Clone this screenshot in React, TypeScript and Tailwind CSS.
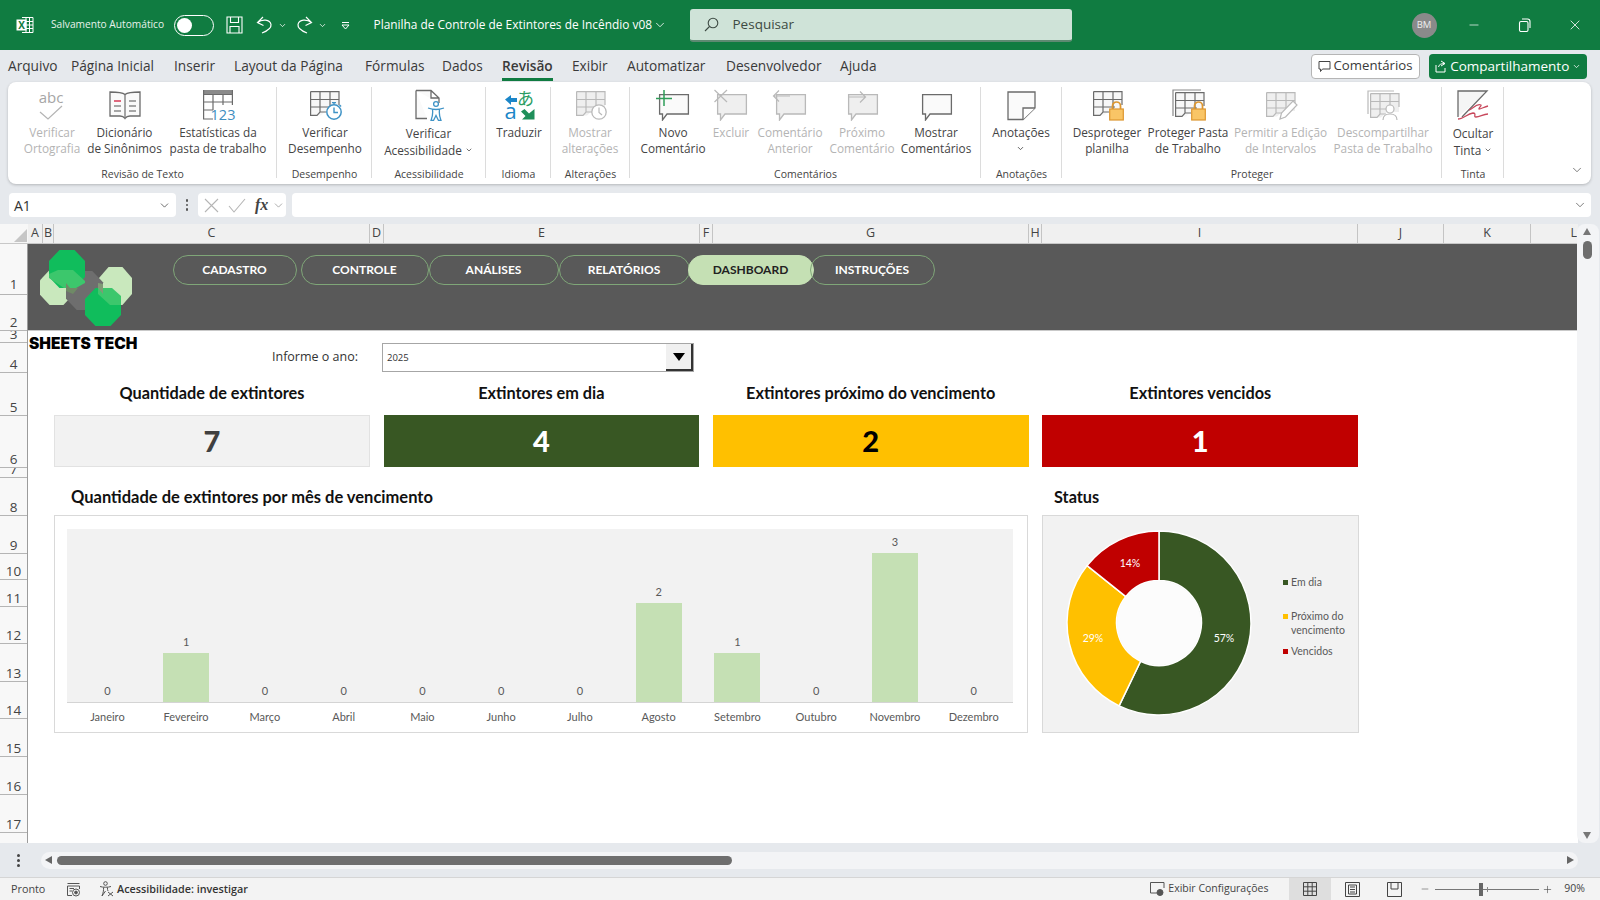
import React from "react";
import { ChevronDown, Minus, X, Plus } from "lucide-react";

const G = "#6b6b6b";
const D = "#b9b9b9";

function SheetGrid({ c, fill, x = 0, y = 0 }: { c: string; fill?: string; x?: number; y?: number }) {
  return (
    <g transform={`translate(${x} ${y})`} fill="none" stroke={c} strokeWidth="1.2">
      <path d="M.6.6H29V19H17L11 24.4H.6Z" fill={fill || "#f7f7f7"} stroke="none" />
      <path d="M.6.6H29V14M.6.6V24.4H7L10 21H16M.6 8.5H29M.6 16H22M10 .6V21M20 .6V18" />
    </g>
  );
}
function Lock({ x, y }: { x: number; y: number }) {
  return (
    <g transform={`translate(${x} ${y})`}>
      <path d="M3.5 8V5a4 4 0 0 1 8 0v3" fill="none" stroke="#dd962f" strokeWidth="1.7" />
      <rect x=".7" y="8" width="13.6" height="11" fill="#f9c566" stroke="#dd962f" strokeWidth="1.2" />
    </g>
  );
}
function Bubble({ c, fill }: { c: string; fill: string }) {
  return <path d="M4.6 5.6H33.4V25H12L7.5 31V25H4.6Z" fill={fill} stroke={c} strokeWidth="1.3" />;
}
function Ico({ children }: { children: React.ReactNode }) {
  return (
    <svg width="36" height="32" viewBox="0 0 36 32" className="shrink-0">
      {children}
    </svg>
  );
}

const Spell = () => (
  <Ico>
    <text x="17" y="13.5" textAnchor="middle" fontSize="15" fill="#a6a6a6" fontFamily="Open Sans, sans-serif">abc</text>
    <path d="M6 23l8 7L28 17" fill="none" stroke="#b4b4b4" strokeWidth="1.2" />
  </Ico>
);
const Book = () => (
  <Ico>
    <path d="M18 5.5C15 3 8 3 3 3V27H13C15 27 17 28 18 29.5C19 28 21 27 23 27H33V3C28 3 21 3 18 5.5Z" fill="#fafafa" stroke={G} strokeWidth="1.3" />
    <path d="M18 5.5V29" stroke={G} strokeWidth="1.2" />
    <path d="M7 12h7" stroke="#d9455f" strokeWidth="1.6" />
    <path d="M7 17h7M7 22h7M22 12h7M22 17h7M22 22h7" stroke="#8a8a8a" strokeWidth="1.3" />
  </Ico>
);
const Stats = () => (
  <Ico>
    <rect x="3.5" y="1" width="29" height="4.5" fill="#8a8a8a" />
    <path d="M3.6 1V30H13M32.4 1V16M3.6 5.5H32.4M3.6 13H32.4M3.6 21H13M13 5.5V21M23 5.5V16" fill="none" stroke={G} strokeWidth="1.2" />
    <text x="23" y="31" textAnchor="middle" fontSize="14.5" fill="#3f8ec0" fontFamily="Open Sans, sans-serif">123</text>
  </Ico>
);
const Perf = () => (
  <Ico>
    <SheetGrid c={G} x={3} y={2} />
    <circle cx="27" cy="23" r="7.2" fill="#fff" stroke="#3f93c6" strokeWidth="1.5" />
    <path d="M27 18.5V23.5H31M25 13.6h4M27 13.6v2M32.5 16l1.6 1.5" fill="none" stroke="#3f93c6" strokeWidth="1.4" />
  </Ico>
);
const Access = () => (
  <Ico>
    <path d="M5 1.5H20L28 9V14M5 1.5V29.5H16M20 1.5V9H28" fill="#fafafa" stroke={G} strokeWidth="1.3" />
    <g fill="none" stroke="#3f93c6" strokeWidth="1.3">
      <circle cx="25" cy="15" r="2.4" />
      <path d="M17 19C20 20 22 20.5 25 20.5S30 20 33 19M21.5 20.5C22 24 21.8 27 20 31.5H22.5L25 26.5L27.5 31.5H30C28.2 27 28 24 28.5 20.5" />
    </g>
  </Ico>
);
const Translate = () => (
  <Ico>
    <path d="M4 10.5L10 6V9H16V13H10V16Z" fill="#1b86c8" />
    <text x="24.5" y="15.5" textAnchor="middle" fontSize="17" fill="#2c9d63" fontFamily="Noto Sans CJK JP, sans-serif">あ</text>
    <text x="9.5" y="30" textAnchor="middle" fontSize="22" fill="#1b86c8" fontFamily="Open Sans, sans-serif">a</text>
    <path d="M33.5 30.5H21L24.5 27L20 22.5L23.5 20L28 24.5L33.5 20Z" fill="#1f8f5a" />
  </Ico>
);
const Changes = () => (
  <Ico>
    <SheetGrid c={D} fill="#efefef" x={4} y={2} />
    <circle cx="27" cy="23" r="7.2" fill="#fff" stroke={D} strokeWidth="1.3" />
    <path d="M27 18.5V23.5L30 26" fill="none" stroke={D} strokeWidth="1.2" />
  </Ico>
);
const NewC = () => (
  <Ico>
    <Bubble c={G} fill="#fafafa" />
    <path d="M1 9.5H17M9 1V17" stroke="#2f9e5a" strokeWidth="1.5" />
  </Ico>
);
const DelC = () => (
  <Ico>
    <Bubble c={D} fill="#efefef" />
    <path d="M1.5 1L14 13M14 1L1.5 13" stroke={D} strokeWidth="1.2" />
  </Ico>
);
const PrevC = () => (
  <Ico>
    <Bubble c={D} fill="#efefef" />
    <path d="M18 7H2M7 1.5L1.5 7L7 12.5" fill="none" stroke={D} strokeWidth="1.2" />
  </Ico>
);
const NextC = () => (
  <Ico>
    <Bubble c={D} fill="#efefef" />
    <path d="M4 8H21M16 2.5L21.5 8L16 13.5" fill="none" stroke={D} strokeWidth="1.2" />
  </Ico>
);
const ShowC = () => (
  <Ico>
    <Bubble c={G} fill="#fafafa" />
  </Ico>
);
const Note = () => (
  <Ico>
    <path d="M5 3H32V19L20 30.5H5Z" fill="#fafafa" stroke={G} strokeWidth="1.3" />
    <path d="M32 19H20V30.5" fill="#fff" stroke={G} strokeWidth="1.3" />
  </Ico>
);
const Unprot = () => (
  <Ico>
    <SheetGrid c={G} x={4} y={2} />
    <Lock x={20} y={12} />
  </Ico>
);
const ProtW = () => (
  <Ico>
    <path d="M3 27V1H31" fill="none" stroke="#8a8a8a" strokeWidth="1.2" />
    <SheetGrid c={G} x={5} y={3} />
    <Lock x={21} y={12} />
  </Ico>
);
const AllowE = () => (
  <Ico>
    <SheetGrid c={D} fill="#efefef" x={3} y={3} />
    <path d="M17 30l1.5-6L30 12l4 4L22.5 28Z" fill="#fff" stroke={D} strokeWidth="1.2" />
  </Ico>
);
const Unshare = () => (
  <Ico>
    <path d="M3 25V2H29" fill="none" stroke={D} strokeWidth="1.2" />
    <SheetGrid c={D} fill="#efefef" x={5} y={4} />
    <circle cx="25" cy="20" r="4" fill="#fff" stroke={D} strokeWidth="1.2" />
    <path d="M18 31C18 27 21 25 25 25S32 27 32 31" fill="#fff" stroke={D} strokeWidth="1.2" />
  </Ico>
);
const Ink = () => (
  <Ico>
    <path d="M33 2H3V28L33 2Z" fill="#f5f5f5" />
    <path d="M3 28V2H32L7 28" fill="none" stroke={G} strokeWidth="1.3" />
    <path d="M14 21C18 20 21 14 26 16C27 17 23 19 24 20C26 20 29 18 33 17M3 30C8 30 12 25 18 24C22 24 18 28 21 28C25 28 28 25 33 25" fill="none" stroke="#c8485c" strokeWidth="1.3" />
  </Ico>
);

type Btn = { l: string[]; icon: React.ReactNode; cls: string; off?: boolean; low?: boolean; caret?: boolean; caretBelow?: boolean };
type Grp = { label: string; w: string; btns: Btn[] };

const groups: Grp[] = [
  {
    label: "Revisão de Texto",
    w: "w-[269px]",
    btns: [
      { l: ["Verificar", "Ortografia"], icon: <Spell />, cls: "w-[57px] ml-[15.5px]", off: true },
      { l: ["Dicionário", "de Sinônimos"], icon: <Book />, cls: "w-[75px] ml-[6.5px]" },
      { l: ["Estatísticas da", "pasta de trabalho"], icon: <Stats />, cls: "w-[98px] ml-[7px]" },
    ],
  },
  { label: "Desempenho", w: "w-[95px]", btns: [{ l: ["Verificar", "Desempenho"], icon: <Perf />, cls: "w-[74px] ml-[11px]" }] },
  { label: "Acessibilidade", w: "w-[114px]", btns: [{ l: ["Verificar", "Acessibilidade"], icon: <Access />, cls: "w-[91px] ml-[11px]", low: true, caret: true }] },
  { label: "Idioma", w: "w-[65px]", btns: [{ l: ["Traduzir"], icon: <Translate />, cls: "w-[46px] ml-[10px]" }] },
  { label: "Alterações", w: "w-[79px]", btns: [{ l: ["Mostrar", "alterações"], icon: <Changes />, cls: "w-[58px] ml-[10px]", off: true }] },
  {
    label: "Comentários",
    w: "w-[351px]",
    btns: [
      { l: ["Novo", "Comentário"], icon: <NewC />, cls: "w-[66px] ml-[10px]" },
      { l: ["Excluir"], icon: <DelC />, cls: "w-[36px] ml-[7px]", off: true },
      { l: ["Comentário", "Anterior"], icon: <PrevC />, cls: "w-[66px] ml-[8px]", off: true },
      { l: ["Próximo", "Comentário"], icon: <NextC />, cls: "w-[66px] ml-[6px]", off: true },
      { l: ["Mostrar", "Comentários"], icon: <ShowC />, cls: "w-[70px] ml-[6px]" },
    ],
  },
  { label: "Anotações", w: "w-[81px]", btns: [{ l: ["Anotações"], icon: <Note />, cls: "w-[60px] ml-[10px]", caretBelow: true }] },
  {
    label: "Proteger",
    w: "w-[380px]",
    btns: [
      { l: ["Desproteger", "planilha"], icon: <Unprot />, cls: "w-[70px] ml-[10px]" },
      { l: ["Proteger Pasta", "de Trabalho"], icon: <ProtW />, cls: "w-[80px] ml-[6px]" },
      { l: ["Permitir a Edição", "de Intervalos"], icon: <AllowE />, cls: "w-[94px] ml-[5.5px]", off: true },
      { l: ["Descompartilhar", "Pasta de Trabalho"], icon: <Unshare />, cls: "w-[98px] ml-[6.5px]", off: true },
    ],
  },
  { label: "Tinta", w: "w-[62px]", btns: [{ l: ["Ocultar", "Tinta"], icon: <Ink />, cls: "w-[42px] ml-[10px]", low: true, caret: true }] },
];

const menu = [
  ["Arquivo", "w-[63px]"],
  ["Página Inicial", "w-[103px]"],
  ["Inserir", "w-[60px]"],
  ["Layout da Página", "w-[131px]"],
  ["Fórmulas", "w-[77px]"],
  ["Dados", "w-[60px]"],
  ["Revisão", "w-[70px]"],
  ["Exibir", "w-[55px]"],
  ["Automatizar", "w-[99px]"],
  ["Desenvolvedor", "w-[114px]"],
  ["Ajuda", "w-[40px]"],
];

const cols = [
  ["A", "w-[15px] justify-center border-r"],
  ["B", "w-[11px] justify-center border-r"],
  ["C", "w-[316px] justify-center border-r"],
  ["D", "w-[14px] justify-center border-r"],
  ["E", "w-[316px] justify-center border-r"],
  ["F", "w-[13px] justify-center border-r"],
  ["G", "w-[316px] justify-center border-r"],
  ["H", "w-[13px] justify-center border-r"],
  ["I", "w-[316px] justify-center border-r"],
  ["J", "w-[86px] justify-center border-r"],
  ["K", "w-[87px] justify-center border-r"],
  ["L", "w-[47px] justify-end pr-[1px]"],
];

const rows = [
  ["1", "h-[51px] pb-[2px]"],
  ["2", "h-[36px]"],
  ["3", "h-[12px]"],
  ["4", "h-[30px]"],
  ["5", "h-[43px]"],
  ["6", "h-[52px]"],
  ["7", "h-[10px]"],
  ["8", "h-[38px]"],
  ["9", "h-[38px]"],
  ["10", "h-[26px]"],
  ["11", "h-[27px]"],
  ["12", "h-[37px]"],
  ["13", "h-[38px]"],
  ["14", "h-[37px]"],
  ["15", "h-[38px]"],
  ["16", "h-[38px]"],
  ["17", "h-[38px]"],
];

const pills = [
  ["CADASTRO", "w-[124px]", false],
  ["CONTROLE", "w-[128px] ml-[4px]", false],
  ["ANÁLISES", "w-[130px]", false],
  ["RELATÓRIOS", "w-[131px]", false],
  ["DASHBOARD", "w-[126px] -ml-[2px]", true],
  ["INSTRUÇÕES", "w-[125px] -ml-[4px]", false],
] as const;

const cards = [
  ["Quantidade de extintores", "7", "bg-[#f2f2f2] border border-[#e2e2e2] text-[#404040]"],
  ["Extintores em dia", "4", "bg-[#385723] text-white"],
  ["Extintores próximo do vencimento", "2", "bg-[#ffc000] text-black"],
  ["Extintores vencidos", "1", "bg-[#c00000] text-white"],
];

const months: [string, number][] = [
  ["Janeiro", 0],
  ["Fevereiro", 1],
  ["Março", 0],
  ["Abril", 0],
  ["Maio", 0],
  ["Junho", 0],
  ["Julho", 0],
  ["Agosto", 2],
  ["Setembro", 1],
  ["Outubro", 0],
  ["Novembro", 3],
  ["Dezembro", 0],
];
const barH = [0, 49, 99, 149];

function Logo() {
  const oct = (x: number, y: number, w: number, h: number) => {
    const a = w * 0.29;
    const b = h * 0.29;
    return `${x + a},${y} ${x + w - a},${y} ${x + w},${y + b} ${x + w},${y + h - b} ${x + w - a},${y + h} ${x + a},${y + h} ${x},${y + h - b} ${x},${y + b}`;
  };
  return (
    <svg width="93" height="76" viewBox="0 0 93 76" className="shrink-0">
      <polygon points={oct(0, 20, 33, 35)} fill="#c9e8bd" />
      <polygon points={oct(59, 17, 33, 38)} fill="#c9e8bd" />
      <polygon points={oct(26, 21, 37, 39)} fill="#6e6e6e" />
      <polygon points={oct(9, 0, 36, 38)} fill="#10bd5c" />
      <polygon points={oct(45, 38, 36, 38)} fill="#10bd5c" />
      <polygon points="9,24 18,20 33,20 45,31 45,33 36,38 24,38 9,28" fill="#3cc76c" />
      <polygon points="58,38 72,38 81,46 81,55 70,55 58,44" fill="#3cc76c" />
      <polygon points="26,33 30,38 38,38 33,44 26,41" fill="#6f8a66" />
      <polygon points="58,33 63,34 63,44 58,38" fill="#7f9a76" />
    </svg>
  );
}

function Donut() {
  const cx = 100;
  const cy = 100;
  const R = 92;
  const r = 42.4;
  const data: [number, string][] = [
    [4 / 7, "#385723"],
    [2 / 7, "#ffc000"],
    [1 / 7, "#c00000"],
  ];
  let a = -Math.PI / 2;
  return (
    <svg width="200" height="200" viewBox="0 0 200 200" className="shrink-0 mt-[7px] ml-[16px]">
      {data.map(([f, c]) => {
        const b = a + f * Math.PI * 2;
        const large = f > 0.5 ? 1 : 0;
        const p = (rad: number, t: number) => `${cx + rad * Math.cos(t)} ${cy + rad * Math.sin(t)}`;
        const d = `M${p(r, a)}L${p(R, a)}A${R} ${R} 0 ${large} 1 ${p(R, b)}L${p(r, b)}A${r} ${r} 0 ${large} 0 ${p(r, a)}Z`;
        a = b;
        return <path key={c} d={d} fill={c} stroke="#fff" strokeWidth="1.5" />;
      })}
      <circle cx={cx} cy={cy} r={r - 0.5} fill="#fcfcfc" />
      <g fontSize="10.5" fill="#fff" textAnchor="middle" fontFamily="Lato, sans-serif">
        <text x="165" y="119">57%</text>
        <text x="34" y="119">29%</text>
        <text x="71" y="44">14%</text>
      </g>
    </svg>
  );
}

export default function App() {
  return (
    <div className="w-[1600px] h-[900px] overflow-hidden flex flex-col bg-[#e6e9ed] font-['Open_Sans',sans-serif] text-[#333]">
      {/* Title bar */}
      <div className="h-[50px] shrink-0 flex items-center bg-[#107c41] text-white">
        <svg width="18" height="18" viewBox="0 0 18 18" className="ml-[16px] shrink-0">
          <path d="M6 1.5H17V16.5H6M10 1.5V16.5M13.5 1.5V16.5M10 5.5H17M10 9H17M10 12.5H17" fill="none" stroke="#fff" strokeWidth="1" />
          <rect x="0.5" y="3.5" width="10" height="11" fill="#fff" />
          <text x="5.5" y="12.5" textAnchor="middle" fontSize="10" fontWeight="700" fill="#107c41" fontFamily="Open Sans, sans-serif">X</text>
        </svg>
        <span className="ml-[17px] w-[114.5px] text-[10.2px] whitespace-nowrap text-[#e8f2ec]">Salvamento Automático</span>
        <span className="ml-[8px] w-[40px] h-[21px] shrink-0 rounded-full border border-white flex items-center pl-[2px]">
          <span className="w-[15px] h-[15px] rounded-full bg-white" />
        </span>
        <svg width="17" height="18" viewBox="0 0 17 18" className="ml-[12.5px] shrink-0" fill="none" stroke="#fff" strokeWidth="1.1">
          <path d="M1 1H16V17H1ZM4.5 1V6.5H12.5V1M4 17V10.5H13V17" />
        </svg>
        <svg width="17" height="18" viewBox="0 0 17 18" className="ml-[13px] shrink-0" fill="none" stroke="#fff" strokeWidth="1.2">
          <path d="M7 1L1.5 6.5L7.5 9.5M1.5 6.5C6 3 14 3 15 8.5C15.5 12 11 15 6 17" />
        </svg>
        <ChevronDown size={9} strokeWidth={2} className="ml-[5px] shrink-0" />
        <svg width="17" height="18" viewBox="0 0 17 18" className="ml-[9px] shrink-0" fill="none" stroke="#fff" strokeWidth="1.2">
          <path d="M10 1L15.5 6.5L9.5 9.5M15.5 6.5C11 3 3 3 2 8.5C1.5 12 6 15 11 17" />
        </svg>
        <ChevronDown size={9} strokeWidth={2} className="ml-[5px] shrink-0" />
        <svg width="9" height="9" viewBox="0 0 9 9" className="ml-[14px] shrink-0" fill="none" stroke="#fff" strokeWidth="1">
          <path d="M1 1.5H8M1 4L4.5 8L8 4Z" />
        </svg>
        <span className="ml-[23.5px] w-[278px] text-[11.9px] whitespace-nowrap">Planilha de Controle de Extintores de Incêndio v08</span>
        <ChevronDown size={14} strokeWidth={1.4} className="ml-[1px] shrink-0" />
        <div className="ml-[23px] w-[382px] h-[33px] shrink-0 rounded-[3px] bg-[#cfe3d8] border-b-2 border-[#5e8a72] flex items-center pl-[14px] text-[#3d4a43]">
          <svg width="15" height="15" viewBox="0 0 15 15" fill="none" stroke="#3d4a43" strokeWidth="1.1">
            <circle cx="9" cy="6" r="4.8" />
            <path d="M5.5 9.5L1 14" />
          </svg>
          <span className="ml-[14px] text-[13.5px]">Pesquisar</span>
        </div>
        <span className="ml-[340px] w-[25px] h-[25px] shrink-0 rounded-full bg-[#8a8a8a] text-[9.5px] flex items-center justify-center text-[#eee]">BM</span>
        <Minus size={14} strokeWidth={1.2} className="ml-[30px] shrink-0" />
        <svg width="14" height="14" viewBox="0 0 14 14" className="ml-[36px] shrink-0" fill="none" stroke="#fff" strokeWidth="1.1">
          <rect x="2.5" y="3.5" width="8.5" height="10" rx="1.5" />
          <path d="M5 1H10.5C12 1 13 2 13 3.5V10" />
        </svg>
        <X size={16} strokeWidth={1.2} className="ml-[36px] shrink-0" />
      </div>

      {/* Menu */}
      <div className="h-[32px] shrink-0 flex items-center pl-[8px] text-[13.7px] text-[#3a3a3a]">
        {menu.map(([m, w]) => (
          <span key={m} className={`${w} shrink-0 whitespace-nowrap pt-[1px]`}>
            {m === "Revisão" ? (
              <span className="relative font-semibold inline-block">
                {m}
                <span className="absolute left-0 right-0 -bottom-[4px] h-[2.5px] bg-[#107c41]" />
              </span>
            ) : (
              m
            )}
          </span>
        ))}
        <div className="ml-auto mr-[13px] flex items-center">
          <div className="w-[109px] h-[25px] bg-white border border-[#b5b5b5] rounded-[4px] flex items-center justify-center gap-[3px] text-[13.2px]">
            <svg width="13" height="13" viewBox="0 0 13 13" fill="none" stroke="#444" strokeWidth="1">
              <path d="M1 1.5H12V9H4.5L2.5 11.5V9H1Z" />
            </svg>
            Comentários
          </div>
          <div className="ml-[9px] w-[158.5px] h-[25px] bg-[#107c41] text-white rounded-[4px] flex items-center justify-center gap-[3px] text-[13.5px]">
            <svg width="13" height="13" viewBox="0 0 13 13" fill="none" stroke="#fff" strokeWidth="1">
              <path d="M7 1L11 3.5L7 6M11 3.5C7 3.5 5 4.5 4.5 7M2 5V12H11V8" />
            </svg>
            <span className="whitespace-nowrap">Compartilhamento</span>
            <ChevronDown size={9} strokeWidth={2} />
          </div>
        </div>
      </div>

      {/* Ribbon */}
      <div className="h-[102px] shrink-0 mx-[8px] mr-[9px] bg-white rounded-[8px] shadow-[0_1px_3px_rgba(0,0,0,0.22)] flex relative">
        {groups.map((g) => (
          <div key={g.label} className={`${g.w} shrink-0 flex flex-col relative`}>
            <span className="absolute right-0 top-[5px] bottom-[6px] w-px bg-[#dcdcdc]" />
            <div className="flex flex-1 pt-[7px]">
              {g.btns.map((b) => (
                <div key={b.l.join()} className={`${b.cls} shrink-0 flex flex-col items-center text-[11.8px] leading-[16.5px] ${b.off ? "text-[#b4b4b4]" : "text-[#444]"}`}>
                  <span className="flex justify-center w-[36px]">{b.icon}</span>
                  <div className={`${b.low ? "mt-[4px]" : "mt-[2.5px]"} flex flex-col items-center whitespace-nowrap`}>
                    {b.l.map((t, i) => (
                      <span key={t} className="flex items-center gap-[3px]">
                        {t}
                        {b.caret && i === b.l.length - 1 && <ChevronDown size={8} strokeWidth={2.2} />}
                      </span>
                    ))}
                    {b.caretBelow && <ChevronDown size={9} strokeWidth={2.2} className="mt-[4px]" />}
                  </div>
                </div>
              ))}
            </div>
            <div className="h-[19px] text-center text-[10.5px] leading-[19px] text-[#444] whitespace-nowrap">{g.label}</div>
          </div>
        ))}
        <ChevronDown size={14} strokeWidth={1.3} className="absolute right-[7px] bottom-[7px] text-[#555]" />
      </div>

      {/* Formula bar */}
      <div className="h-[24px] mt-[9px] shrink-0 flex items-center pl-[9px] pr-[9px]">
        <div className="w-[167px] h-full bg-white rounded-[4px] flex items-center justify-between pl-[5px] pr-[5px] text-[14px]">
          A1
          <ChevronDown size={13} strokeWidth={1.3} />
        </div>
        <div className="w-[22px] flex flex-col items-center gap-[2px]">
          <span className="w-[2.5px] h-[2.5px] bg-[#555] rounded-full" />
          <span className="w-[2.5px] h-[2.5px] bg-[#555] rounded-full" />
          <span className="w-[2.5px] h-[2.5px] bg-[#555] rounded-full" />
        </div>
        <div className="w-[88px] h-full bg-white rounded-[4px] flex items-center pl-[6px]">
          <svg width="15" height="15" viewBox="0 0 15 15" fill="none" stroke="#b5b5b5" strokeWidth="1.1" className="shrink-0">
            <path d="M1 1L14 14M14 1L1 14" />
          </svg>
          <svg width="18" height="15" viewBox="0 0 18 15" fill="none" stroke="#b5b5b5" strokeWidth="1.1" className="ml-[9px] shrink-0">
            <path d="M1 8L6 14L17 1" />
          </svg>
          <span className="ml-[9px] font-['Liberation_Serif',serif] italic font-bold text-[#444] text-[16px] leading-none">fx</span>
          <ChevronDown size={13} strokeWidth={1.1} className="ml-[4px] text-[#777] shrink-0" />
        </div>
        <div className="ml-[6px] flex-1 h-full bg-white rounded-[4px] flex items-center justify-end pr-[4px]">
          <ChevronDown size={14} strokeWidth={1.3} className="text-[#555]" />
        </div>
      </div>

      {/* Sheet */}
      <div className="mt-[7px] h-[619px] shrink-0 flex">
        <div className="w-[1578px] shrink-0 flex flex-col overflow-hidden">
          <div className="h-[20px] shrink-0 flex bg-[#f0f0f0] text-[12.5px] text-[#444] border-b border-[#c8c8c8]">
            <div className="w-[28px] shrink-0 relative bg-[#f7f7f7] overflow-hidden">
              <svg width="13" height="13" viewBox="0 0 13 13" className="absolute right-[1px] bottom-[1px]">
                <path d="M13 0V13H0Z" fill="#c6c6c6" />
              </svg>
            </div>
            {cols.map(([c, w]) => (
              <div key={c} className={`${w} shrink-0 flex items-center border-[#c4c4c4] leading-none`}>
                {c}
              </div>
            ))}
          </div>
          <div className="flex-1 flex min-h-0">
            <div className="w-[28px] shrink-0 flex flex-col bg-[#f8f8f8] border-r border-[#9c9c9c] text-[#444] text-[13.5px] overflow-hidden">
              {rows.map(([r, h]) => (
                <div key={r} className={`${h} shrink-0 flex items-end justify-center border-b border-[#b5b5b5] leading-[15px] overflow-hidden`}>
                  {r}
                </div>
              ))}
            </div>
            <div className="w-[1550px] shrink-0 bg-white flex flex-col">
              {/* Header band */}
              <div className="h-[87px] shrink-0 bg-[#595959] border-b border-[#c9c9c9] flex items-start pl-[12px] pt-[6px]">
                <Logo />
                <div className="ml-[39.5px] mt-[5px] flex font-['Lato',sans-serif] font-bold text-[12px]">
                  {pills.map(([t, w, on]) => (
                    <div
                      key={t}
                      className={`${w} h-[30px] rounded-full flex items-center justify-center border ${on ? "bg-[#c5e0b4] text-[#222] border-[#c5e0b4]" : "border-[#7fa678] text-white"}`}
                    >
                      {t}
                    </div>
                  ))}
                </div>
              </div>

              {/* Year row */}
              <div className="h-[41px] shrink-0 flex items-start">
                <div className="w-[110px] ml-px mt-[3px] shrink-0 font-['Inter',sans-serif] font-black text-[15.5px] text-black whitespace-nowrap leading-[20px]">SHEETS TECH</div>
                <div className="w-[219px] mt-[16px] shrink-0 text-right text-[12.5px] text-[#333] leading-[20px]">Informe o ano:</div>
                <div className="ml-[24px] mt-[12px] w-[312px] h-[29px] shrink-0 border border-[#a6a6a6] flex items-center justify-between pl-[4px] text-[9.5px] text-[#333]">
                  <span className="pt-[2px]">2025</span>
                  <div className="w-[27px] h-full bg-[#f0f0f0] border-r-2 border-b-2 border-[#333] flex items-center justify-center">
                    <span className="w-0 h-0 border-x-[6.5px] border-x-transparent border-t-[8px] border-t-black" />
                  </div>
                </div>
              </div>

              {/* Cards */}
              <div className="ml-[26px] grid grid-cols-[316px_315.5px_316px_316px] grid-rows-[43px_52px] gap-x-[13.6px] font-['Lato',sans-serif]">
                {cards.map(([t]) => (
                  <div key={t} className="flex items-center justify-center font-bold text-[16.3px] text-[#111] whitespace-nowrap">
                    {t}
                  </div>
                ))}
                {cards.map(([t, v, c]) => (
                  <div key={t + v} className={`${c} flex items-center justify-center font-black text-[29px]`}>
                    {v}
                  </div>
                ))}
              </div>

              {/* Chart titles */}
              <div className="h-[48px] shrink-0 flex items-end pb-[8px] font-['Lato',sans-serif] font-bold text-[16.3px] text-[#111] leading-[20px]">
                <span className="ml-[43px] w-[983px] shrink-0 text-[16.5px]">Quantidade de extintores por mês de vencimento</span>
                <span>Status</span>
              </div>

              {/* Charts */}
              <div className="ml-[26px] flex font-['Lato',sans-serif] text-[#595959]">
                <div className="w-[973.5px] h-[218px] shrink-0 border border-[#d9d9d9] pl-[12px] pt-[13px] flex flex-col">
                  <div className="w-[946px] h-[174px] shrink-0 bg-[#f2f2f2] border-b border-[#d4d4d4] flex pl-[1px]">
                    {months.map(([m, v]) => (
                      <div key={m} className="flex-1 flex flex-col items-center justify-end text-[11px]">
                        <span className="mb-[4px] leading-[14px]">{v}</span>
                        {v > 0 && <div className="w-[46px] bg-[#c5e0b4]" style={{ height: barH[v] }} />}
                      </div>
                    ))}
                  </div>
                  <div className="w-[946px] flex mt-[6px] pl-[1px]">
                    {months.map(([m]) => (
                      <div key={m} className="flex-1 text-center text-[11px] leading-[16px]">
                        {m}
                      </div>
                    ))}
                  </div>
                </div>
                <div className="ml-[14.5px] w-[317px] h-[218px] shrink-0 bg-[#f2f2f2] border border-[#d9d9d9] flex">
                  <Donut />
                  <div className="ml-[24px] pt-[59px] text-[10.5px] leading-[14px] text-[#595959]">
                    <div className="flex items-center">
                      <span className="w-[5px] h-[5px] bg-[#385723]" />
                      <span className="ml-[3px]">Em dia</span>
                    </div>
                    <div className="flex items-start mt-[20px]">
                      <span className="w-[5px] h-[5px] bg-[#ffc000] mt-[5px] shrink-0" />
                      <span className="ml-[3px]">
                        Próximo do
                        <br />
                        vencimento
                      </span>
                    </div>
                    <div className="flex items-center mt-[7px]">
                      <span className="w-[5px] h-[5px] bg-[#c00000]" />
                      <span className="ml-[3px]">Vencidos</span>
                    </div>
                  </div>
                </div>
              </div>
            </div>
          </div>
        </div>
        {/* Vertical scrollbar */}
        <div className="w-[22px] shrink-0 flex flex-col items-center bg-[#f3f4f6] rounded-b-[8px] rounded-t-[8px] ml-[-1px] pt-[4px] pb-[4px] pr-[2px]">
          <span className="w-0 h-0 border-x-[4px] border-x-transparent border-b-[7px] border-b-[#777]" />
          <span className="mt-[6px] w-[9px] h-[18px] rounded-full bg-[#6e6e6e]" />
          <span className="mt-auto w-0 h-0 border-x-[4px] border-x-transparent border-t-[7px] border-t-[#777]" />
        </div>
      </div>

      {/* Horizontal scrollbar */}
      <div className="h-[34px] shrink-0 flex items-center">
        <div className="w-[41px] shrink-0 flex flex-col items-center gap-[2px] pr-[5px]">
          <span className="w-[3px] h-[3px] bg-[#444] rounded-full" />
          <span className="w-[3px] h-[3px] bg-[#444] rounded-full" />
          <span className="w-[3px] h-[3px] bg-[#444] rounded-full" />
        </div>
        <div className="w-[1537px] h-[17px] shrink-0 bg-[#f3f4f6] rounded-full flex items-center pl-[4px] pr-[4px]">
          <span className="w-0 h-0 border-y-[4.5px] border-y-transparent border-r-[7px] border-r-[#666]" />
          <span className="ml-[5px] w-[675px] h-[9px] rounded-full bg-[#6e6e6e]" />
          <span className="ml-auto w-0 h-0 border-y-[4.5px] border-y-transparent border-l-[7px] border-l-[#666]" />
        </div>
      </div>

      {/* Status bar */}
      <div className="h-[23px] shrink-0 bg-[#f3f3f3] border-t border-[#d5d5d5] flex items-center text-[10.8px] text-[#444]">
        <span className="ml-[11px] w-[55px]">Pronto</span>
        <svg width="15" height="15" viewBox="0 0 15 15" fill="none" stroke="#555" strokeWidth="1" className="shrink-0">
          <path d="M1.5 1.5H13.5M1.5 4H13.5M1.5 4V13.5H6M13.5 4V7M3.5 6.5H8M3.5 9H6" />
          <circle cx="10" cy="10.5" r="3.5" />
          <circle cx="10" cy="10.5" r="1.4" fill="#555" />
        </svg>
        <svg width="15" height="16" viewBox="0 0 15 16" fill="none" stroke="#555" strokeWidth="1" className="ml-[18px] shrink-0">
          <circle cx="6.5" cy="2.5" r="1.8" />
          <path d="M1 5.5C4 6.5 9 6.5 12 5.5M4.5 6.5C4.7 9 4.5 11 3 15M8.5 6.5C8.4 8 8.5 9 9 10M3 15L6.5 10M9 11L14 15M14 11L9 15" />
        </svg>
        <span className="ml-[3px] font-semibold whitespace-nowrap text-[#333]">Acessibilidade: investigar</span>
        <svg width="18" height="17" viewBox="0 0 18 17" fill="none" stroke="#555" strokeWidth="1" className="ml-auto shrink-0">
          <path d="M8 12H1.5V1.5H15V7" />
          <circle cx="11" cy="11.5" r="3" fill="#555" />
        </svg>
        <span className="ml-[1px] w-[121px] whitespace-nowrap text-[10.5px]">Exibir Configurações</span>
        <div className="w-[42px] h-full bg-[#dedede] flex items-center justify-center">
          <svg width="14" height="14" viewBox="0 0 14 14" fill="none" stroke="#444" strokeWidth="1">
            <path d="M.5.5H13.5V13.5H.5ZM.5 4.8H13.5M.5 9.2H13.5M4.8.5V13.5M9.2.5V13.5" />
          </svg>
        </div>
        <div className="w-[42px] h-full flex items-center justify-center">
          <svg width="15" height="15" viewBox="0 0 15 15" fill="none" stroke="#444" strokeWidth="1">
            <path d="M.5.5H14.5V14.5H.5ZM3.5 3H11.5V12H3.5ZM5 5H10M5 7.5H10M5 10H10" />
          </svg>
        </div>
        <div className="w-[42px] h-full flex items-center justify-center">
          <svg width="15" height="15" viewBox="0 0 15 15" fill="none" stroke="#444" strokeWidth="1">
            <path d="M.5.5H14.5V14.5H.5ZM4 .5V7H11V.5" />
          </svg>
        </div>
        <Minus size={10} strokeWidth={1.6} className="ml-[5px] text-[#666] shrink-0" />
        <div className="ml-[5px] w-[104px] h-px bg-[#777] relative shrink-0">
          <span className="absolute left-[44px] -top-[6px] w-[4px] h-[13px] bg-[#666]" />
          <span className="absolute left-[52px] -top-[2px] w-px h-[5px] bg-[#888]" />
        </div>
        <Plus size={11} strokeWidth={1.3} className="ml-[3px] text-[#444] shrink-0" />
        <span className="ml-[11px] mr-[15px] text-[10.5px]">90%</span>
      </div>
    </div>
  );
}
